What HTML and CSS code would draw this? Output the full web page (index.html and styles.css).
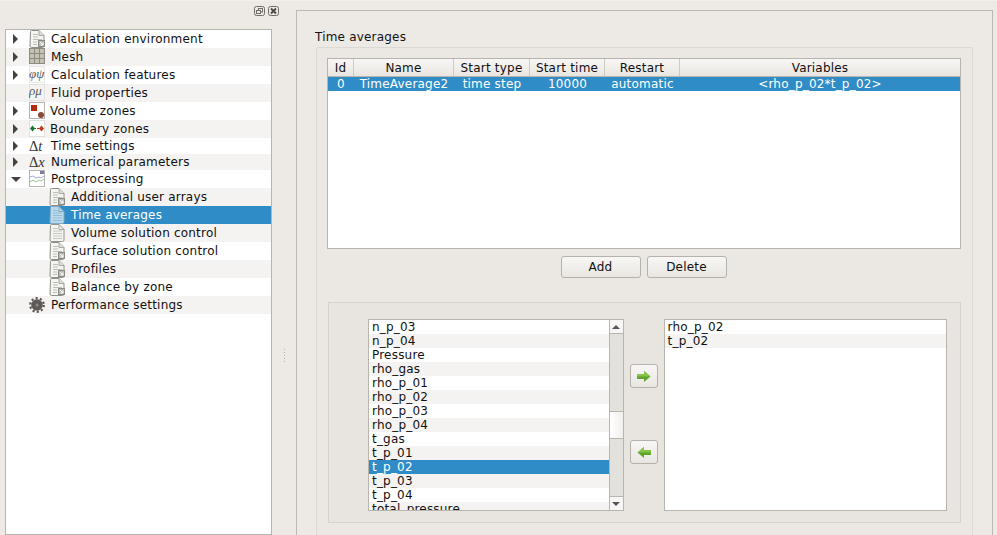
FILE: index.html
```html
<!DOCTYPE HTML>
<html>
<head>
	<meta http-equiv="Content-Type" content="text/html; charset=utf-8">
	<title>Time averages</title>
	<link rel="stylesheet" href="styles.css">
</head>
<body>
	<svg class="defs" width="0" height="0">
		<symbol id="doc" viewBox="0 0 16 18">
			<path d="M1.500 1.500a1 1 0 0 1 1-1h7.500l5 5v10.500a1.500 1.500 0 0 1-1.500 1.500h-11a1.500 1.500 0 0 1-1.500-1.500z" fill="#f4f4f1" stroke="#8e8e89"/>
			<path d="M10 .5v5h5" fill="#dddcd8" stroke="#a8a8a3"/>
			<path d="M4 4.500h5M4 7h5M4 9.500h9M4 12h4M4 14.500h4" stroke="#bdbdb8"/>
			<rect x="9.500" y="10.500" width="6" height="6" fill="#b9b9b4" stroke="#8b8b86"/>
			<path d="M11 12l3 3M14 12.500v2.500h-2.500" fill="none" stroke="#fff"/>
		</symbol>
		<symbol id="page" viewBox="0 0 16 18">
			<path d="M1.500 1.500a1 1 0 0 1 1-1h7.500l5 5v10.500a1.500 1.500 0 0 1-1.500 1.500h-11a1.500 1.500 0 0 1-1.500-1.500z" fill="var(--page, #f4f4f1)" stroke="var(--edge, #94948f)"/>
			<path d="M10 .5v5h5" fill="none" stroke="var(--edge, #a8a8a3)"/>
			<path d="M4 4.500h5M4 7h9M4 9.500h9M4 12h9M4 14.500h9" stroke="var(--rule, #c6c6c1)"/>
		</symbol>
		<symbol id="arrow-right" viewBox="0 0 14 11">
			<path d="M0 3h7V0l6.500 5.500L7 11V8H0z" fill="#5fa52c"/>
			<path d="M0 3h7V0l6.500 5.500H0z" fill="#86c44a"/>
		</symbol>
		<symbol id="arrow-left" viewBox="0 0 14 11">
			<path d="M14 3H7V0L.5 5.500 7 11V8h7z" fill="#5fa52c"/>
			<path d="M14 3H7V0L.5 5.500H14z" fill="#86c44a"/>
		</symbol>
	</svg>

	<div class="app">
		<aside class="dock">
			<div class="dock-bar">
				<svg class="dock-btn" viewBox="0 0 11 10"><rect x=".5" y=".5" width="10" height="9" rx="2" fill="none" stroke="#6f6c67"/><rect x="4.500" y="2.500" width="4" height="3.500" fill="none" stroke="#6f6c67"/><rect x="2.500" y="4.500" width="4" height="3" fill="#edeae6" stroke="#6f6c67"/></svg>
				<svg class="dock-btn" viewBox="0 0 11 10"><rect x=".5" y=".5" width="10" height="9" rx="2" fill="none" stroke="#6f6c67"/><path d="M3 2.500l5 5M8 2.500l-5 5" stroke="#4f4c48" stroke-width="2"/></svg>
			</div>
			<ul class="tree">
				<li class="node"><span class="twisty closed"></span><svg class="icon"><use href="#doc"/></svg><span>Calculation environment</span></li>
				<li class="node"><span class="twisty closed"></span>
					<svg class="icon" viewBox="0 0 16 18"><rect x=".5" y=".5" width="15" height="15" fill="#c5c0b4" stroke="#8f8b80"/><path d="M5.500 .5v15M10.500 .5v15M.5 5.500h15M.5 10.500h15" stroke="#8f8b80"/></svg>
					<span>Mesh</span></li>
				<li class="node"><span class="twisty closed"></span>
					<svg class="icon" viewBox="0 0 16 18"><rect x=".5" y=".5" width="15" height="16" fill="#fbfbfa" stroke="#d2d0cc" stroke-dasharray="1 1"/><text class="math soft" x="0" y="12">φψ</text></svg>
					<span>Calculation features</span></li>
				<li class="node"><span class="twisty"></span>
					<svg class="icon" viewBox="0 0 16 18"><rect x=".5" y=".5" width="15" height="16" fill="#f4f3f1" stroke="#d2d0cc" stroke-dasharray="1 1"/><text class="math soft" x="0" y="11">ρμ</text></svg>
					<span>Fluid properties</span></li>
				<li class="node tight"><span class="twisty closed"></span>
					<svg class="icon" viewBox="0 0 16 18"><rect x=".5" y=".5" width="15" height="16" fill="#fff" stroke="#b5b3af"/><rect x="2" y="3" width="6" height="6" fill="#b32a12"/><circle cx="12" cy="13" r="3" fill="#8a4a3a"/></svg>
					<span>Volume zones</span></li>
				<li class="node tight"><span class="twisty closed"></span>
					<svg class="icon" viewBox="0 0 16 18"><rect x=".5" y=".5" width="15" height="16" fill="#fff" stroke="#c9c7c3" stroke-dasharray="1 1"/><path d="M1 8.500l2.500-3 2.500 3-2.500 3zM5 8h2v1H5z" fill="#187a2a"/><path d="M10 8.500l2.500-3 2.500 3-2.500 3zM8 8h3v1H8z" fill="#c0391c"/></svg>
					<span>Boundary zones</span></li>
				<li class="node short"><span class="twisty closed"></span>
					<svg class="icon" viewBox="0 0 16 16"><text class="math" x="0" y="13">Δ<tspan class="ital">t</tspan></text></svg>
					<span>Time settings</span></li>
				<li class="node short"><span class="twisty closed"></span>
					<svg class="icon" viewBox="0 0 16 16"><text class="math" x="0" y="13">Δ<tspan class="ital">x</tspan></text></svg>
					<span>Numerical parameters</span></li>
				<li class="node"><span class="twisty open"></span>
					<svg class="icon" viewBox="0 0 16 18"><rect x=".5" y=".5" width="15" height="16" fill="#fff" stroke="#b5b3af"/><rect x="11" y="1" width="4" height="3" fill="#7a80a0"/><path d="M1 7l3-1 3 2 3-1 2 1 3-2" fill="none" stroke="#a7a6dc"/><path d="M1 12l3-2 3 2 3-2 2 1 3-2" fill="none" stroke="#9cc48c"/></svg>
					<span>Postprocessing</span></li>
				<li class="node child"><span class="twisty"></span><svg class="icon"><use href="#doc"/></svg><span>Additional user arrays</span></li>
				<li class="node child current"><span class="twisty"></span><svg class="icon"><use href="#page"/></svg><span>Time averages</span></li>
				<li class="node child"><span class="twisty"></span><svg class="icon"><use href="#page"/></svg><span>Volume solution control</span></li>
				<li class="node child"><span class="twisty"></span><svg class="icon"><use href="#doc"/></svg><span>Surface solution control</span></li>
				<li class="node child"><span class="twisty"></span><svg class="icon"><use href="#doc"/></svg><span>Profiles</span></li>
				<li class="node child"><span class="twisty"></span><svg class="icon"><use href="#doc"/></svg><span>Balance by zone</span></li>
				<li class="node"><span class="twisty"></span>
					<svg class="icon" viewBox="0 0 16 18"><circle cx="8" cy="9" r="5.800" fill="#5f5a57"/><circle cx="8" cy="9" r="6.800" fill="none" stroke="#5f5a57" stroke-width="2.200" stroke-dasharray="2.200 2.140"/><circle cx="8" cy="9" r="1.500" fill="#8d8986"/></svg>
					<span>Performance settings</span></li>
			</ul>
		</aside>

		<div class="splitter"><i></i><i></i><i></i><i></i><i></i></div>

		<main class="frame">
			<div class="group-title">Time averages</div>
			<section class="group">
				<table class="grid">
					<colgroup>
						<col class="c-id"><col class="c-name"><col class="c-type"><col class="c-time"><col class="c-restart"><col>
					</colgroup>
					<thead>
						<tr><th>Id</th><th>Name</th><th>Start type</th><th>Start time</th><th>Restart</th><th>Variables</th></tr>
					</thead>
					<tbody>
						<tr class="current"><td>0</td><td>TimeAverage2</td><td>time step</td><td>10000</td><td>automatic</td><td>&lt;rho_p_02*t_p_02&gt;</td></tr>
					</tbody>
				</table>

				<div class="actions">
					<button class="btn">Add</button>
					<button class="btn">Delete</button>
				</div>

				<div class="picker">
					<div class="list list-all">
						<ul class="items">
							<li>n_p_03</li><li>n_p_04</li><li>Pressure</li><li>rho_gas</li>
							<li>rho_p_01</li><li>rho_p_02</li><li>rho_p_03</li><li>rho_p_04</li>
							<li>t_gas</li><li>t_p_01</li><li class="current">t_p_02</li><li>t_p_03</li>
							<li>t_p_04</li><li>total_pressure</li>
						</ul>
						<div class="scrollbar">
							<span class="step"><b class="up"></b></span>
							<span class="track"></span>
							<span class="thumb"></span>
							<span class="track long"></span>
							<span class="step"><b class="down"></b></span>
						</div>
					</div>
					<div class="movers">
						<button class="mover"><svg><use href="#arrow-right"/></svg></button>
						<button class="mover"><svg><use href="#arrow-left"/></svg></button>
					</div>
					<div class="list list-chosen">
						<ul class="items">
							<li>rho_p_02</li><li>t_p_02</li>
						</ul>
					</div>
				</div>
			</section>
		</main>
	</div>
</body>
</html>
```

FILE: styles.css
```css
html, body{
	margin: 0;
	height: 535px;
	overflow: hidden;
}
body{
	background-color: #edeae6;
	border-top: 1px solid #f2f0ed;
	box-sizing: border-box;
	font-family: "DejaVu Sans", sans-serif;
	font-size: 12px;
	letter-spacing: .2px;
	color: #111;
}
.defs{
	position: absolute;
}
ul{
	margin: 0;
	padding: 0;
	list-style: none;
}

.app{
	display: flex;
	padding-left: 5px;
	height: 534px;
	overflow: hidden;
}

/* left dock */
.dock{
	width: 274px;
	flex: none;
}
.dock-bar{
	height: 28px;
	display: flex;
	justify-content: flex-end;
	gap: 3px;
	padding-top: 5px;
	box-sizing: border-box;
}
.dock-btn{
	width: 11px;
	height: 10px;
}
.tree{
	width: 265px;
	height: 504px;
	background: #fff;
	border: 1px solid #b8b4ae;
}
.node{
	height: 18px;
	display: flex;
	align-items: center;
	white-space: nowrap;
}
.node:nth-child(even){
	background: #f5f3f1;
}
.node.short{
	height: 16px;
}
.node.child{
	padding-left: 20px;
}
.node.current{
	background: #308cc6;
	color: #fff;
	--page: #bcd9ea;
	--edge: #7fa9c4;
	--rule: #8fbcd8;
}
.twisty{
	width: 23px;
	height: 10px;
	flex: none;
	position: relative;
}
.twisty.closed::before{
	content: "";
	position: absolute;
	left: 7px;
	top: 0;
	border-left: 5px solid #454340;
	border-top: 5px solid transparent;
	border-bottom: 5px solid transparent;
}
.twisty.open::before{
	content: "";
	position: absolute;
	left: 5px;
	top: 3px;
	border-top: 5px solid #454340;
	border-left: 5px solid transparent;
	border-right: 5px solid transparent;
}
.icon{
	width: 16px;
	height: 18px;
	flex: none;
	margin-right: 6px;
}
.node.short .icon{
	height: 16px;
}
.node.tight .icon{
	margin-right: 5px;
}
.math{
	font-family: "Liberation Serif", serif;
	font-size: 14.5px;
	letter-spacing: 0;
	fill: #333;
}
.math.soft{
	font-size: 13px;
	font-style: italic;
	fill: #5a5a56;
}
.ital{
	font-style: italic;
}

.splitter{
	width: 17px;
	flex: none;
	padding: 348px 0 0 5px;
	display: flex;
	flex-direction: column;
	gap: 2px;
	box-sizing: border-box;
}
.splitter i{
	width: 1px;
	height: 1px;
	background: #b5b1ab;
}

/* right panel */
.frame{
	width: 658px;
	height: 600px;
	margin-top: 9px;
	flex: none;
	padding: 0 19px 0 18px;
	border: 1px solid #bdb9b2;
}
.group-title{
	height: 36px;
	padding-top: 19px;
	box-sizing: border-box;
	line-height: 15px;
}
.group{
	height: 560px;
	width: 657px;
	margin-left: 1px;
	border: 1px solid #dcd9d4;
	border-radius: 2px;
	padding: 10px;
	background: #ebe8e4;
	box-sizing: border-box;
}

/* table */
.grid{
	width: 634px;
	height: 191px;
	display: block;
	background: #fff;
	border: 1px solid #b8b4ae;
	border-collapse: separate;
	border-spacing: 0;
	box-sizing: border-box;
	table-layout: fixed;
}
.c-id{ width: 26px; }
.c-name{ width: 100px; }
.c-type{ width: 76px; }
.c-time{ width: 75px; }
.c-restart{ width: 75px; }
.grid th{
	height: 17px;
	padding: 0;
	font-weight: normal;
	background: linear-gradient(#f8f6f4, #e9e6e2);
	border-right: 1px solid #cdc9c3;
	border-bottom: 1px solid #b8b4ae;
}
.grid th:last-child{
	border-right: 0;
	width: 280px;
}
.grid td{
	height: 14px;
	padding: 0;
	text-align: center;
	line-height: 14px;
}
.grid tr.current td{
	background: #308cc6;
	color: #fff;
}

.actions{
	display: flex;
	justify-content: center;
	gap: 6px;
	padding: 7px 2px 0 0;
	height: 46px;
}
.btn{
	width: 80px;
	height: 22px;
	padding: 0;
	font: inherit;
	letter-spacing: inherit;
	color: inherit;
	background: linear-gradient(#f8f7f5, #e9e6e2);
	border: 1px solid #b5b1ab;
	border-radius: 3px;
}

/* variable picker */
.picker{
	margin-left: 1px;
	height: 221px;
	width: 633px;
	padding: 16px 13px 0 39px;
	border: 1px solid #d6d3ce;
	box-sizing: border-box;
	background: #e8e5e0;
	display: flex;
}
.list{
	height: 192px;
	background: #fff;
	border: 1px solid #b8b4ae;
	box-sizing: border-box;
	overflow: hidden;
}
.list-all{
	width: 256px;
	display: flex;
}
.list-chosen{
	width: 284px;
}
.items{
	flex: 1;
	min-width: 0;
}
.items li{
	height: 14px;
	line-height: 14px;
	padding-left: 3px;
}
.items li:nth-child(even){
	background: #f5f3f1;
}
.items li.current{
	background: #308cc6;
	color: #fff;
}
.scrollbar{
	width: 13px;
	flex: none;
	height: 190px;
	display: flex;
	flex-direction: column;
	border-left: 1px solid #b8b4ae;
}
.step{
	height: 13px;
	background: #f7f6f4;
	display: flex;
	align-items: center;
	justify-content: center;
	flex: none;
}
.track{
	height: 77px;
	background: #e3e1dc;
	border-top: 1px solid #b8b4ae;
	flex: none;
}
.track.long{
	flex: 1;
	border-bottom: 1px solid #b8b4ae;
}
.thumb{
	height: 26px;
	background: linear-gradient(90deg, #fff, #f1efec);
	border-top: 1px solid #b8b4ae;
	flex: none;
}
.up{
	border-bottom: 4px solid #555;
	border-left: 4px solid transparent;
	border-right: 4px solid transparent;
}
.down{
	border-top: 4px solid #555;
	border-left: 4px solid transparent;
	border-right: 4px solid transparent;
}
.movers{
	width: 40px;
	flex: none;
	display: flex;
	flex-direction: column;
	align-items: center;
	padding-top: 45px;
	gap: 52px;
	box-sizing: border-box;
}
.mover{
	width: 28px;
	height: 24px;
	padding: 0;
	background: linear-gradient(#f8f7f5, #e9e6e2);
	border: 1px solid #b5b1ab;
	border-radius: 3px;
	display: flex;
	align-items: center;
	justify-content: center;
}
.mover svg{
	width: 14px;
	height: 11px;
}
```
